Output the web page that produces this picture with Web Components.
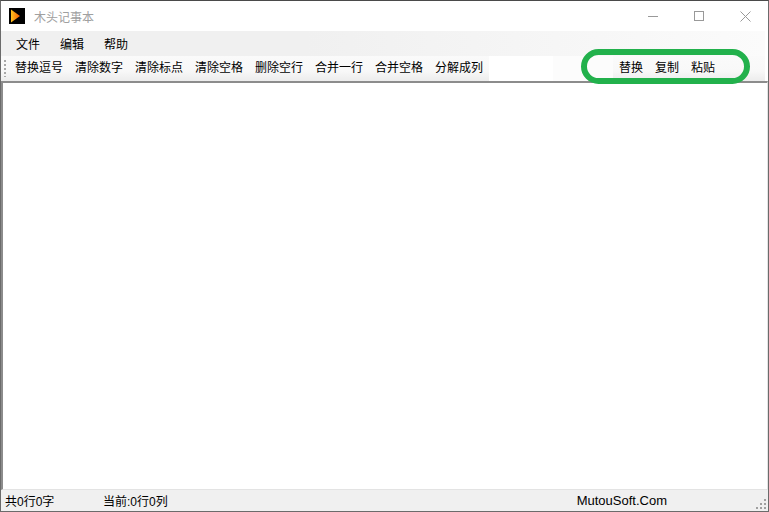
<!DOCTYPE html>
<html lang="zh">
<head>
<meta charset="utf-8">
<title>木头记事本</title>
<style>
  html, body { margin: 0; height: 100%; background: #fff; }
  body { font: 12px "Liberation Sans", "Noto Sans CJK SC", sans-serif; }
</style>
</head>
<body>
<app-window>
  <title-bar slot="title">木头记事本</title-bar>
  <menu-bar slot="menu">
    <menu-entry>文件</menu-entry>
    <menu-entry>编辑</menu-entry>
    <menu-entry>帮助</menu-entry>
  </menu-bar>
  <tool-bar slot="tools">
    <tool-button>替换逗号</tool-button>
    <tool-button>清除数字</tool-button>
    <tool-button>清除标点</tool-button>
    <tool-button>清除空格</tool-button>
    <tool-button>删除空行</tool-button>
    <tool-button>合并一行</tool-button>
    <tool-button>合并空格</tool-button>
    <tool-button>分解成列</tool-button>
    <tool-button slot="right">替换</tool-button>
    <tool-button slot="right">复制</tool-button>
    <tool-button slot="right">粘贴</tool-button>
  </tool-bar>
  <status-bar slot="status"></status-bar>
</app-window>

<script>
class appWindow extends HTMLElement {
  constructor(){
    super();
    this.attachShadow({mode:"open"});
    this.shadowRoot.innerHTML = `
      <style>
        :host {
          display: flex;
          flex-direction: column;
          box-sizing: border-box;
          position: relative;
          width: 769px;
          height: 512px;
          border: 1px solid #6b6b6b;
          border-top-color: #4a4a4a;
          background: #fff;
          overflow: hidden;
        }
        .editor {
          flex: 1;
          box-sizing: border-box;
          background: #fff;
          border-top: 2px solid #8c8c8c;
          border-left: 2px solid #8c8c8c;
          border-right: 1px solid #e3e3e3;
          border-bottom: 1px solid #e3e3e3;
        }
        /* the green mark sits over the toolbar */
        .mark {
          position: absolute;
          left: 580px;
          top: 48px;
          width: 169px;
          height: 35px;
          box-sizing: border-box;
          border: 6px solid #22b14c;
          border-radius: 18px;
        }
      </style>
      <slot name="title"></slot>
      <slot name="menu"></slot>
      <slot name="tools"></slot>
      <div class="editor"></div>
      <slot name="status"></slot>
      <div class="mark"></div>
    `;
  }
}

class titleBar extends HTMLElement {
  constructor(){
    super();
    this.attachShadow({mode:"open"});
    this.shadowRoot.innerHTML = `
      <style>
        :host {
          display: flex;
          align-items: center;
          height: 30px;
          padding-left: 8px;
          background: #fff;
          color: #a0a0a0;
          font-size: 12px;
        }
        .logo { width: 16px; height: 16px; display: block; }
        .name { margin-left: 9px; flex: 1; }
        .btn { width: 46px; height: 30px; display: flex; align-items: center; justify-content: center; }
        .btn svg { display: block; }
      </style>
      <svg class="logo" viewBox="0 0 16 16">
        <defs>
          <linearGradient id="g" x1="0" y1="0" x2="1" y2="0">
            <stop offset="0" stop-color="#ffc21e"/>
            <stop offset="1" stop-color="#f25a00"/>
          </linearGradient>
        </defs>
        <rect width="16" height="16" fill="#000"/>
        <path d="M2 1.5L11 8L2 14.5Z" fill="url(#g)"/>
      </svg>
      <span class="name"><slot></slot></span>
      <div class="btn"><svg width="11" height="11" viewBox="0 0 11 11"><path d="M0 5.5H10" stroke="#999" fill="none"/></svg></div>
      <div class="btn"><svg width="11" height="11" viewBox="0 0 11 11"><rect x="0.5" y="0.5" width="9" height="9" stroke="#999" fill="none"/></svg></div>
      <div class="btn"><svg width="11" height="11" viewBox="0 0 11 11"><path d="M0.5 0.5L10.5 10.5M10.5 0.5L0.5 10.5" stroke="#999" fill="none"/></svg></div>
    `;
  }
}

class menuBar extends HTMLElement {
  constructor(){
    super();
    this.attachShadow({mode:"open"});
    this.shadowRoot.innerHTML = `
      <style>
        :host {
          display: flex;
          align-items: center;
          gap: 20px;
          height: 25px;
          margin-right: 3px;
          padding-left: 15px;
          padding-top: 3px;
          box-sizing: border-box;
          background: linear-gradient(to right, #f0f0f0, #f0f0f0 40%, #fbfbfb);
        }
      </style>
      <slot></slot>
    `;
  }
}

class menuEntry extends HTMLElement {
  constructor(){
    super();
    this.attachShadow({mode:"open"});
    this.shadowRoot.innerHTML = `
      <style>:host { display: block; color: #000; font-size: 12px; line-height: 16px; }</style>
      <slot></slot>
    `;
  }
}

class toolBar extends HTMLElement {
  constructor(){
    super();
    this.attachShadow({mode:"open"});
    this.shadowRoot.innerHTML = `
      <style>
        :host {
          display: flex;
          height: 25px;
          margin-right: 3px;
          background: #fff;
        }
        .left, .right {
          display: flex;
          align-items: center;
          box-sizing: border-box;
          padding-bottom: 1px;
          background: linear-gradient(#fafafa, #f8f8f8 60%, #ececec);
        }
        .left { padding-left: 3px; padding-right: 6px; }
        .grip {
          width: 2px;
          height: 17px;
          margin-right: 9px;
          background: repeating-linear-gradient(#a8a8a8 0 2px, transparent 2px 4px);
        }
        .items { display: flex; gap: 12px; }
        .spare {
          width: 60px;
          margin-left: auto;
          background: #fcfcfc;
        }
        .right { padding-left: 6px; padding-right: 50px; gap: 12px; }
      </style>
      <div class="left"><div class="grip"></div><div class="items"><slot></slot></div></div>
      <div class="spare"></div>
      <div class="right"><slot name="right"></slot></div>
    `;
  }
}

class toolButton extends HTMLElement {
  constructor(){
    super();
    this.attachShadow({mode:"open"});
    this.shadowRoot.innerHTML = `
      <style>:host { display: block; color: #000; font-size: 12px; line-height: 16px; }</style>
      <slot></slot>
    `;
  }
}

class statusBar extends HTMLElement {
  constructor(){
    super();
    this.attachShadow({mode:"open"});
    this.shadowRoot.innerHTML = `
      <style>
        :host {
          display: flex;
          align-items: center;
          height: 21px;
          background: #f0f0f0;
          font-size: 12px;
          color: #000;
          position: relative;
        }
        .a { margin-left: 4px; width: 98px; }
        .c { margin-left: auto; margin-right: 101px; font-size: 13px; }
        svg { position: absolute; right: 1px; bottom: 1px; }
      </style>
      <span class="a">共0行0字</span>
      <span>当前:0行0列</span>
      <span class="c">MutouSoft.Com</span>
      <svg width="11" height="11" viewBox="0 0 11 11" fill="#a0a0a0">
        <rect x="8" y="0" width="2" height="2"/>
        <rect x="4" y="4" width="2" height="2"/><rect x="8" y="4" width="2" height="2"/>
        <rect x="0" y="8" width="2" height="2"/><rect x="4" y="8" width="2" height="2"/><rect x="8" y="8" width="2" height="2"/>
      </svg>
    `;
  }
}

customElements.define("app-window", appWindow);
customElements.define("title-bar", titleBar);
customElements.define("menu-bar", menuBar);
customElements.define("menu-entry", menuEntry);
customElements.define("tool-bar", toolBar);
customElements.define("tool-button", toolButton);
customElements.define("status-bar", statusBar);
</script>
</body>
</html>
